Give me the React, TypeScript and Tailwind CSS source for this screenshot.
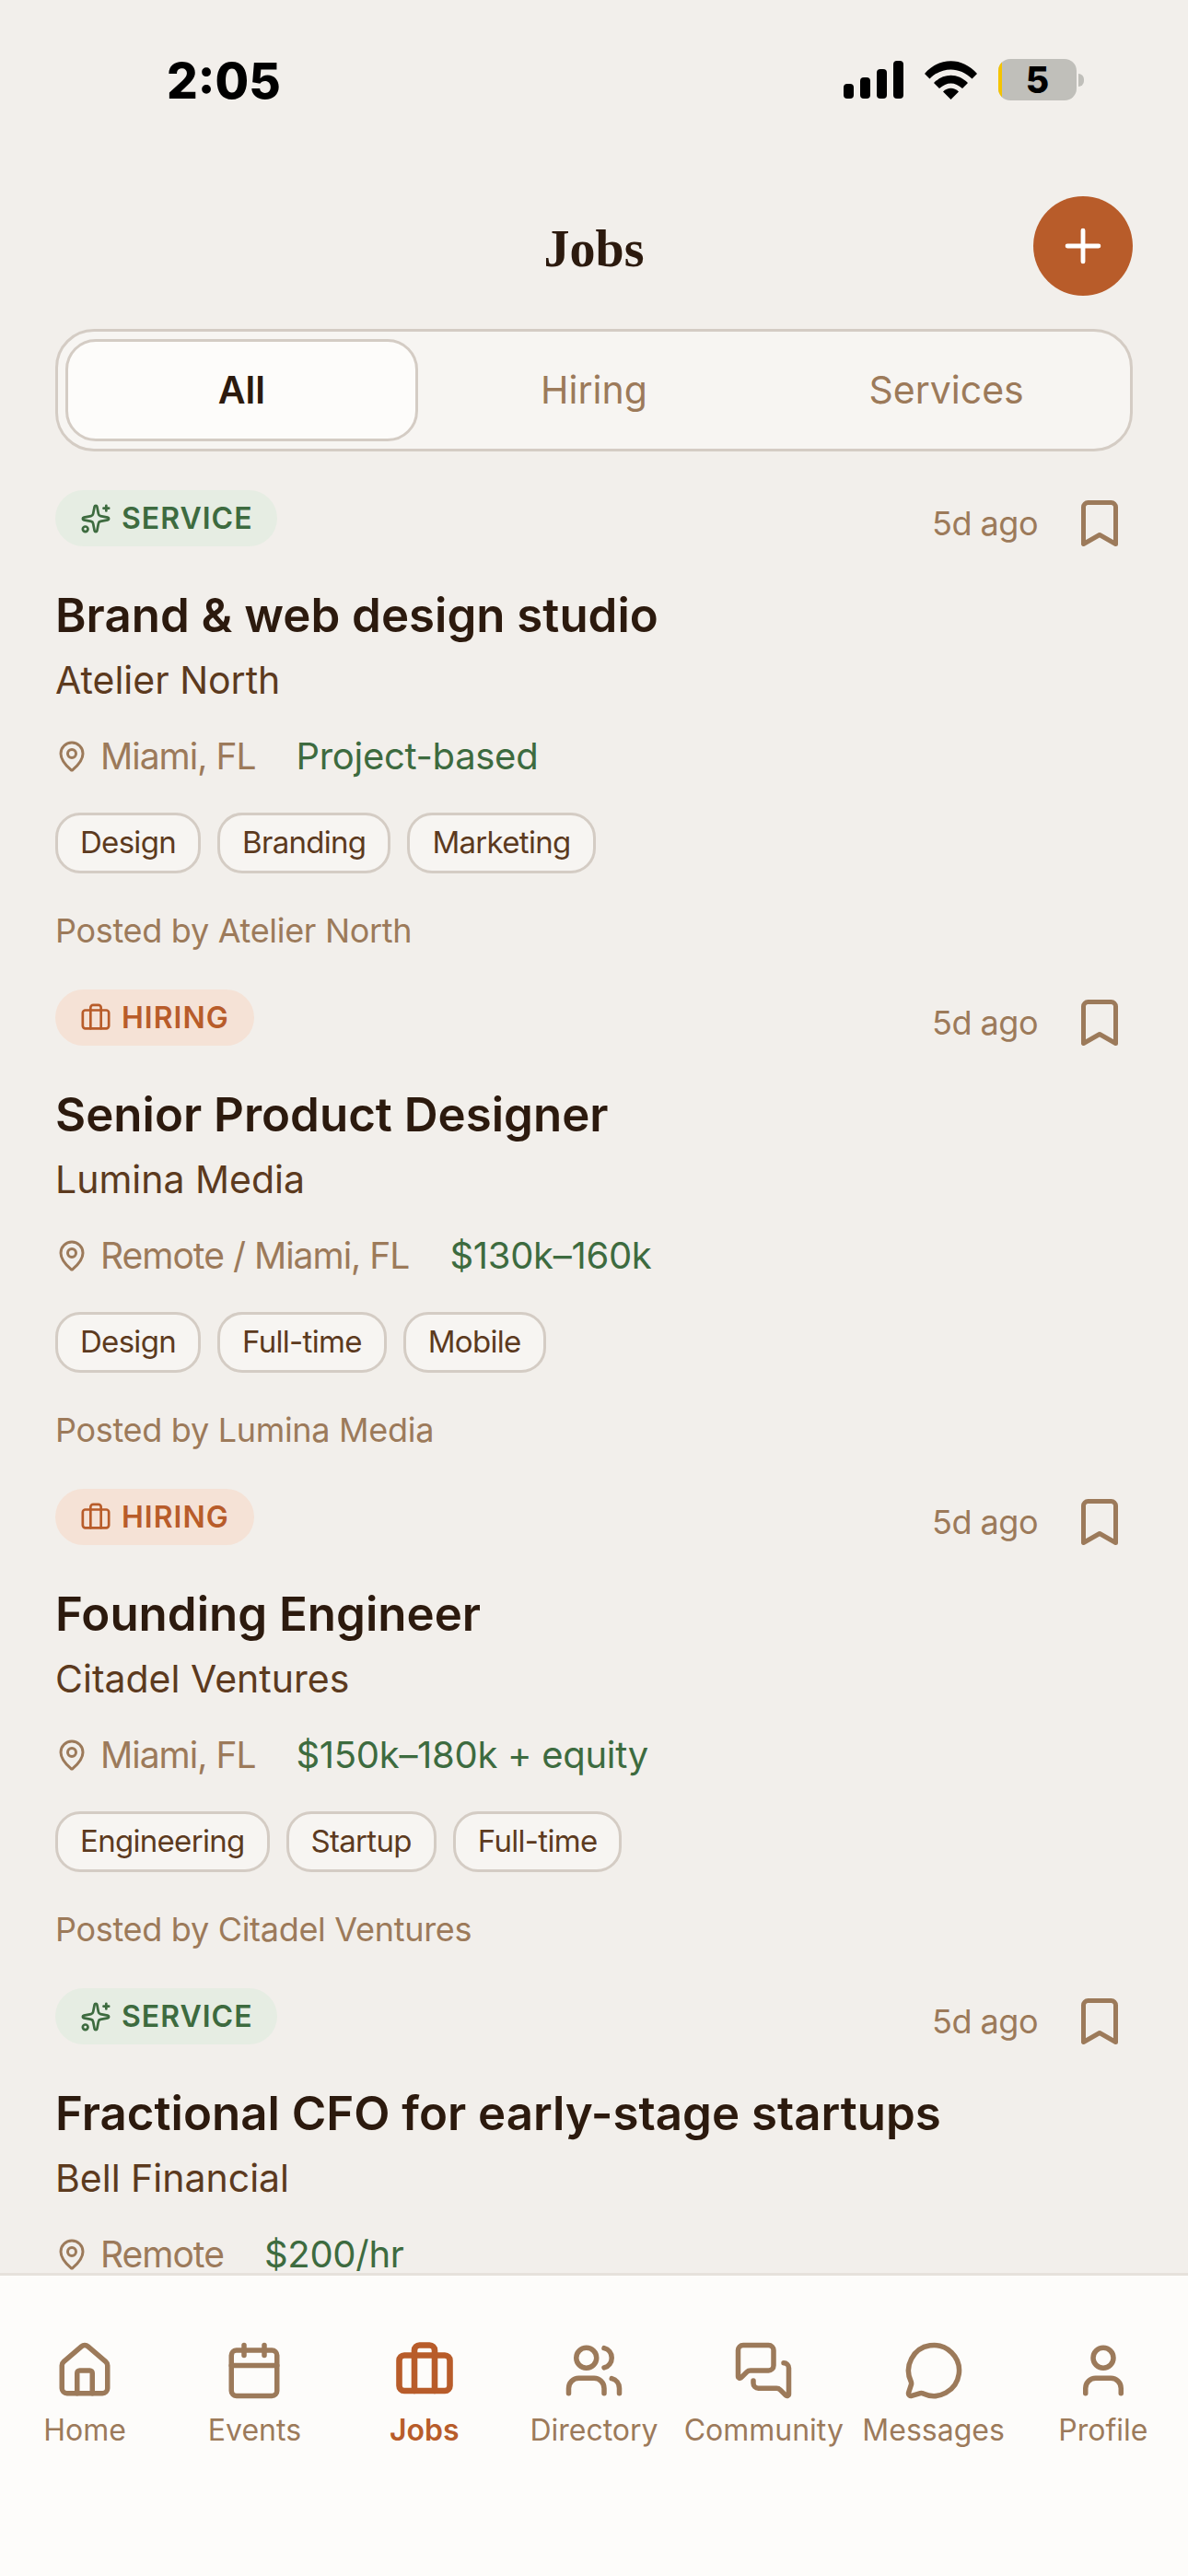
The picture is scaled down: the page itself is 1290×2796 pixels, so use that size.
import { Bookmark, Briefcase, Calendar, House, MapPin, MessageCircle, MessagesSquare, Plus, Sparkles, User, Users } from 'lucide-react';

const jobs = [
  { kind: 'service', title: 'Brand & web design studio', company: 'Atelier North', place: 'Miami, FL', pay: 'Project-based', tags: ['Design', 'Branding', 'Marketing'] },
  { kind: 'hiring', title: 'Senior Product Designer', company: 'Lumina Media', place: 'Remote / Miami, FL', pay: '$130k–160k', tags: ['Design', 'Full-time', 'Mobile'] },
  { kind: 'hiring', title: 'Founding Engineer', company: 'Citadel Ventures', place: 'Miami, FL', pay: '$150k–180k + equity', tags: ['Engineering', 'Startup', 'Full-time'] },
  { kind: 'service', title: 'Fractional CFO for early-stage startups', company: 'Bell Financial', place: 'Remote', pay: '$200/hr', tags: [] as string[] },
];

const navItems = [
  { label: 'Home', icon: House },
  { label: 'Events', icon: Calendar },
  { label: 'Jobs', icon: Briefcase, active: true },
  { label: 'Directory', icon: Users },
  { label: 'Community', icon: MessagesSquare },
  { label: 'Messages', icon: MessageCircle },
  { label: 'Profile', icon: User },
];

function StatusBar() {
  return (
    <div className="flex h-[190px] shrink-0 items-start justify-between pl-[181px] pr-[113px] pt-[56px]">
      <span className="font-['Inter'] text-[53px] font-extrabold leading-[64px] text-black">2:05</span>
      <div className="flex items-center pt-[8px]">
        <svg width="65" height="41" viewBox="0 0 65 41" fill="black">
          <rect x="0" y="25" width="11" height="16" rx="4" />
          <rect x="18" y="18" width="11" height="23" rx="4" />
          <rect x="36" y="9" width="11" height="32" rx="4" />
          <rect x="54" y="0" width="11" height="41" rx="4" />
        </svg>
        <svg className="ml-[23px]" width="57" height="42" viewBox="0 0 57 42" fill="black">
          <path d="M0 14 C16 -4.500 41 -4.500 57 14 L51.500 19.500 C38 6 19 6 5.500 19.500 Z" />
          <path d="M10 24 C21 13 36 13 47 24 L41 30 C33 22.500 24 22.500 16 30 Z" />
          <path d="M20 33.500 C25 28.500 32 28.500 37 33.500 L28.500 42 Z" />
        </svg>
        <div className="relative ml-[23px] flex h-[45px] w-[85px] items-center justify-center overflow-hidden rounded-[13px] bg-[#c0bfba]">
          <div className="absolute bottom-0 left-0 top-0 w-[4px] bg-[#f5c400]" />
          <span className="font-['Inter'] text-[39px] font-extrabold leading-none text-black">5</span>
        </div>
        <div className="ml-[2px] h-[14px] w-[6px] rounded-r-full bg-[#c0bfba]" />
      </div>
    </div>
  );
}

function Badge({ kind }: { kind: string }) {
  if (kind === 'service') {
    return (
      <div className="flex h-[61px] items-center gap-[11px] rounded-full bg-[#e6ede3] pl-[27px] pr-[26px] text-[#3d6b3f]">
        <Sparkles size={34} strokeWidth={1.9} />
        <span className="text-[32px] font-semibold tracking-[1px]">SERVICE</span>
      </div>
    );
  }
  return (
    <div className="flex h-[61px] items-center gap-[11px] rounded-full bg-[#f5e2d6] pl-[27px] pr-[27px] text-[#b85c2a]">
      <Briefcase size={34} strokeWidth={1.9} />
      <span className="text-[32px] font-semibold tracking-[1px]">HIRING</span>
    </div>
  );
}

function JobCard({ job }: { job: (typeof jobs)[number] }) {
  return (
    <div className="mb-[39px]">
      <div className="flex h-[61px] items-start justify-between">
        <Badge kind={job.kind} />
        <div className="mr-[6px] mt-[6px] flex h-[60px] items-center gap-[37px]">
          <span className="text-[36px] tracking-[-0.5px] text-[#9c7a5a]">5d ago</span>
          <Bookmark size={60} strokeWidth={2} className="text-[#9c7a5a]" />
        </div>
      </div>
      <h2 className="mt-[41px] text-[51px] font-semibold leading-[68px] text-[#2c1a0e]">{job.title}</h2>
      <p className="mt-[8px] text-[41px] leading-[56px] text-[#5c3a1e]">{job.company}</p>
      <div className="mt-[27px] flex h-[56px] items-center">
        <MapPin size={36} strokeWidth={2} className="text-[#9c7a5a]" />
        <span className="ml-[13px] text-[39px] tracking-[-1px] text-[#9c7a5a]">{job.place}</span>
        <span className="ml-[44px] text-[40px] tracking-[-0.3px] text-[#3d6b3f]">{job.pay}</span>
      </div>
      {job.tags.length > 0 && (
        <>
          <div className="mt-[33px] flex gap-[18px]">
            {job.tags.map((tag) => (
              <span key={tag} className="flex h-[66px] items-center rounded-[27px] border-[3px] border-[#d4ccc4] bg-[#f7f5f2] px-[24px] text-[33px] tracking-[-0.7px] text-[#5c3a1e]">
                {tag}
              </span>
            ))}
          </div>
          <p className="mt-[37px] text-[36px] leading-[50px] tracking-[-0.3px] text-[#9c7a5a]">Posted by {job.company}</p>
        </>
      )}
    </div>
  );
}

export default function App() {
  return (
    <div className="flex h-[2796px] w-[1290px] flex-col overflow-hidden bg-[#f2efeb] font-['Inter',sans-serif]">
      <StatusBar />

      {/* Header */}
      <div className="relative flex h-[167px] shrink-0 items-center justify-center">
        <h1 className="pb-[8px] font-['Liberation_Serif',serif] text-[56px] font-bold text-[#2c1a0e]">Jobs</h1>
        <button className="absolute right-[60px] top-[23px] flex h-[108px] w-[108px] items-center justify-center rounded-full bg-[#b85c2a] text-white">
          <Plus size={58} strokeWidth={2} />
        </button>
      </div>

      {/* Tabs */}
      <div className="mx-[60px] grid h-[133px] shrink-0 grid-cols-3 rounded-[42px] border-[3px] border-[#d4ccc4] bg-[#f7f5f2] p-[8px] text-[41px]">
        <div className="flex items-center justify-center rounded-[33px] border-[3px] border-[#d4ccc4] bg-[#fdfcfa] font-semibold text-[#2c1a0e]">All</div>
        <div className="flex items-center justify-center text-[#9c7a5a]">Hiring</div>
        <div className="flex items-center justify-center text-[#9c7a5a]">Services</div>
      </div>

      {/* List */}
      <div className="min-h-0 flex-1 overflow-hidden px-[60px] pt-[42px]">
        {jobs.map((job) => (
          <JobCard key={job.title} job={job} />
        ))}
      </div>

      {/* Bottom nav */}
      <div className="grid h-[329px] shrink-0 grid-cols-7 border-t-[3px] border-[#e6e1db] bg-[#fdfcfa] pt-[70px]">
        {navItems.map((item) => {
          const Icon = item.icon;
          return (
            <div key={item.label} className={item.active ? 'flex flex-col items-center text-[#b85c2a]' : 'flex flex-col items-center text-[#9c7a5a]'}>
              <Icon size={66} strokeWidth={item.active ? 2.4 : 2} />
              <span className={item.active ? 'mt-[10px] whitespace-nowrap text-[32px] font-semibold leading-[44px]' : 'mt-[10px] whitespace-nowrap text-[32px] leading-[44px]'}>{item.label}</span>
            </div>
          );
        })}
      </div>
    </div>
  );
}
